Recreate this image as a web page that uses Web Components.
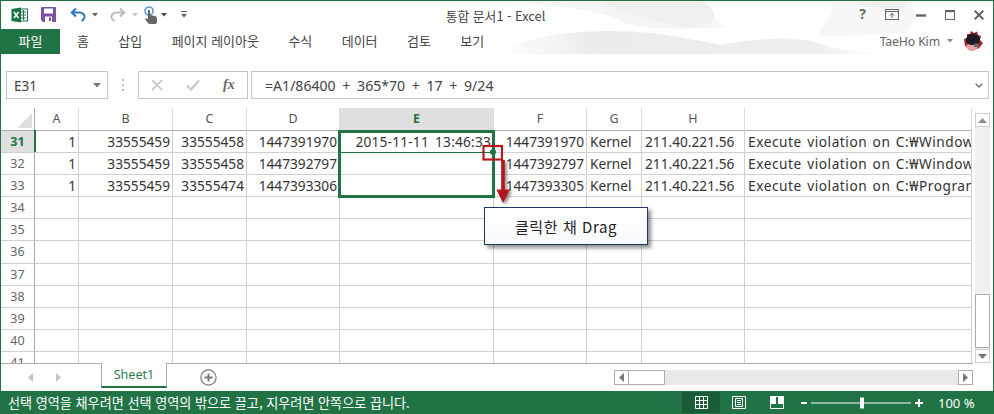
<!DOCTYPE html>
<html lang="ko">
<head>
<meta charset="utf-8">
<title>통합 문서1 - Excel</title>
<style>
  html, body { margin: 0; padding: 0; background: #fff; }
  body { font-family: "Noto Sans", "Noto Sans CJK KR", sans-serif; }
</style>
</head>
<body>
<excel-window>
  <excel-titlebar>통합 문서1 - Excel</excel-titlebar>
  <excel-tabs user="TaeHo Kim"></excel-tabs>
  <excel-formula cell="E31">=A1/86400 + 365*70 + 17 + 9/24</excel-formula>
  <div class="sheet-area" style="display:flex;height:255px;margin-top:9px">
    <excel-grid></excel-grid>
    <excel-vscroll></excel-vscroll>
  </div>
  <excel-sheetbar>Sheet1</excel-sheetbar>
  <excel-status zoom="100 %">선택 영역을 채우려면 선택 영역의 밖으로 끌고, 지우려면 안쪽으로 끕니다.</excel-status>
  <excel-callout slot="over">클릭한 채 Drag</excel-callout>
</excel-window>

<script>
const FONT = `"Noto Sans", "Noto Sans CJK KR", sans-serif`;
const KR = `"Noto Sans CJK KR", "Noto Sans", sans-serif`;

const COLS = [
  { name: "A", w: 44 }, { name: "B", w: 94 }, { name: "C", w: 74 }, { name: "D", w: 93 },
  { name: "E", w: 154, cls: "date" }, { name: "F", w: 93 }, { name: "G", w: 55, cls: "l" }, { name: "H", w: 103, cls: "l" }, { name: "", w: 227, cls: "l msg" }
];

const ROWS = {
  31: ["1", "33555459", "33555458", "1447391970", "2015-11-11 13:46:33", "1447391970", "Kernel", "211.40.221.56", "Execute violation on C:₩Window"],
  32: ["1", "33555459", "33555458", "1447392797", "", "1447392797", "Kernel", "211.40.221.56", "Execute violation on C:₩Window"],
  33: ["1", "33555459", "33555474", "1447393306", "", "1447393305", "Kernel", "211.40.221.56", "Execute violation on C:₩Program"]
};

// 창 전체 틀
class ExcelWindow extends HTMLElement {
  constructor() {
    super();
    this.attachShadow({ mode: "open" });
    this.shadowRoot.innerHTML = `
      <style>
        :host { display: block; position: relative; width: 994px; height: 414px; box-sizing: border-box;
                border: 1px solid #217346; border-bottom: 0; background: #fff; overflow: hidden; }
        .art { position: absolute; left: 0; top: 0; width: 992px; height: 54px; }
        .content { position: relative; display: flex; flex-direction: column; height: 100%; }
      </style>
      <svg class="art" viewBox="0 0 992 54">
        <defs>
          <linearGradient id="fade" x1="0" x2="1" y1="0" y2="0">
            <stop offset="0" stop-color="#eeeeee" stop-opacity="0"/>
            <stop offset=".25" stop-color="#ececec"/>
            <stop offset=".8" stop-color="#eeeeee"/>
            <stop offset="1" stop-color="#f3f3f3" stop-opacity="0"/>
          </linearGradient>
        </defs>
        <path d="M490 53 C530 36 560 30 610 30 C650 30 680 36 720 44 C760 36 800 34 830 46 C850 50 870 52 895 53Z" fill="url(#fade)"/>
        <path d="M520 0 C560 6 600 10 620 20 C640 30 690 28 725 26 C705 16 712 6 690 0Z" fill="#f5f5f5"/>
        <path d="M600 0 C610 8 640 16 672 24 C690 28 706 26 712 18 C716 10 708 4 700 0Z" fill="#f0f0f0"/>
        <path d="M830 0 C838 10 815 30 818 35 C830 36 870 34 905 32 C915 20 915 8 910 0Z" fill="#f7f7f7"/>
        <path d="M855 0 C855 4 870 8 905 8 C905 4 905 2 904 0Z" fill="#f0f0f0"/>
      </svg>
      <div class="content"><slot></slot></div>
      <slot name="over"></slot>
    `;
  }
}

// 제목 표시줄
class ExcelTitlebar extends HTMLElement {
  constructor() {
    super();
    this.attachShadow({ mode: "open" });
    this.shadowRoot.innerHTML = `
      <style>
        :host { display: grid; grid-template-columns: 1fr auto 1fr; height: 28px; align-items: center;
                font: 12.8px ${KR}; color: #444; }
        .qat { display: flex; align-items: center; padding-left: 10px; margin-top: -1px; }
        .title { padding-right: 3px; margin-top: 0; }
        .ctl { display: flex; align-items: center; justify-content: flex-end; margin-top: -1px; }
        .help { font: bold 14px ${FONT}; color: #6a6a6a; margin-right: 19px; margin-top: -2px; }
        svg { display: block; flex: none; }
      </style>
      <div class="qat">
        <svg width="17" height="16" viewBox="0 0 17 16">
          <rect x="8" y="2" width="8.5" height="12" fill="#fff" stroke="#1e7145"/>
          <path d="M10 5h5M10 8h5M10 11h5M12.5 3v10" stroke="#1e7145" fill="none"/>
          <path d="M0.5 2 L10 0.5 V15.5 L0.5 14Z" fill="#1e7145"/>
          <path d="M3 5 L7.5 11 M7.5 5 L3 11" stroke="#fff" stroke-width="1.5"/>
        </svg>
        <svg style="margin-left:13px" width="15" height="15" viewBox="0 0 15 15">
          <path d="M0 1 Q0 0 1 0 H14 Q15 0 15 1 V15 H2 L0 13Z" fill="#7d519f"/>
          <rect x="3" y="1.5" width="9" height="5" fill="#fff"/>
          <rect x="4" y="9.5" width="7" height="5.5" fill="#fff"/>
          <rect x="8" y="10.5" width="2" height="3.5" fill="#7d519f"/>
        </svg>
        <svg style="margin-left:14px" width="16" height="15" viewBox="0 0 16 15">
          <path d="M6 1.5 L1.8 5.5 L6 9.5" fill="none" stroke="#2f75b5" stroke-width="2"/>
          <path d="M2 5.5 H9 C13 5.5 15 8 14.5 10.5 C14 12.5 13 13.5 11.5 14" fill="none" stroke="#2f75b5" stroke-width="2"/>
        </svg>
        <svg style="margin-left:6px" width="6" height="4" viewBox="0 0 6 4"><path d="M0 0H6L3 3.5Z" fill="#666"/></svg>
        <svg style="margin-left:12px" width="16" height="15" viewBox="0 0 16 15">
          <path d="M10 1.5 L14.2 5.5 L10 9.5" fill="none" stroke="#bcbcbc" stroke-width="2"/>
          <path d="M14 5.5 H7 C3 5.5 1 8 1.5 10.5 C2 12.5 3 13.5 4.5 14" fill="none" stroke="#bcbcbc" stroke-width="2"/>
        </svg>
        <svg style="margin-left:6px" width="6" height="4" viewBox="0 0 6 4"><path d="M0 0H6L3 3.5Z" fill="#c4c4c4"/></svg>
        <svg style="margin-left:5px" width="16" height="18" viewBox="0 0 16 18">
          <circle cx="6" cy="5" r="4" fill="none" stroke="#5b9bd5" stroke-width="1.6"/>
          <path d="M5 4.5 Q6 3 7 4.5 V9 L12 10 Q14 10.5 14 12.5 V16 Q14 18 12 18 H7 Q5.5 18 4.5 16.5 L2 13 Q2.5 11.5 5 13Z" fill="#666"/>
        </svg>
        <svg style="margin-left:2px" width="6" height="4" viewBox="0 0 6 4"><path d="M0 0H6L3 3.5Z" fill="#444"/></svg>
        <svg style="margin-left:14px" width="6" height="7" viewBox="0 0 6 7"><path d="M0 0H6V1H0ZM0 3H6L3 6.5Z" fill="#666"/></svg>
      </div>
      <div class="title"><slot></slot></div>
      <div class="ctl">
        <span class="help">?</span>
        <svg style="margin-right:17px" width="14" height="11" viewBox="0 0 14 11">
          <rect x=".5" y=".5" width="13" height="10" fill="none" stroke="#666"/>
          <path d="M0 2.5H14M7 9V4.5M4.8 6.5L7 4.2L9.2 6.5" fill="none" stroke="#666"/>
        </svg>
        <svg style="margin-right:19px;margin-top:2px" width="10" height="3" viewBox="0 0 10 3"><rect width="10" height="2.4" y=".3" fill="#666"/></svg>
        <svg style="margin-right:19px" width="10" height="10" viewBox="0 0 10 10"><rect x=".5" y=".5" width="9" height="9" fill="none" stroke="#666"/><rect width="10" height="2.2" fill="#666"/></svg>
        <svg style="margin-right:9px" width="10" height="10" viewBox="0 0 10 10"><path d="M.7 .7L9.3 9.3M9.3 .7L.7 9.3" stroke="#666" stroke-width="2"/></svg>
      </div>
    `;
  }
}

// 리본 탭 줄
class ExcelTabs extends HTMLElement {
  constructor() {
    super();
    this.attachShadow({ mode: "open" });
    const tabs = ["홈", "삽입", "페이지 레이아웃", "수식", "데이터", "검토", "보기"];
    this.shadowRoot.innerHTML = `
      <style>
        :host { display: flex; height: 25px; align-items: center; font: 13px ${KR}; color: #444; }
        .file { width: 59px; height: 25px; line-height: 24px; text-align: center; background: #217346; color: #fff; }
        .tab { padding: 0 14.7px; white-space: nowrap; margin-top: -3px; }
        .tab:first-of-type { margin-left: 2.3px; }
        .list { display: flex; }
        .user { margin-left: auto; display: flex; align-items: center; font: 12.3px ${FONT}; letter-spacing: -.15px; color: #666; padding-right: 10px; margin-top: -1px; }
        .user svg { display: block; }
      </style>
      <div class="file">파일</div>
      <div class="list">${tabs.map(t => `<div class="tab">${t}</div>`).join("")}</div>
      <div class="user">
        <span>${this.getAttribute("user")}</span>
        <svg style="margin:0 10px 0 7px" width="6" height="4" viewBox="0 0 6 4"><path d="M0 0H6L3 3.5Z" fill="#8a8a8a"/></svg>
        <svg width="20" height="22" viewBox="0 0 20 22">
          <path d="M2 16 L1 9 L4 8 L4 4 L7 4 L8 1 L11 3 L14 1.5 L15 5 L18 6 L17 10 L20 13 L17 17 L15 19 H6Z" fill="#a8242a"/>
          <ellipse cx="10" cy="10" rx="7" ry="6.5" fill="#1d1b22"/>
          <path d="M3 16 Q4 13 8 15 L12 15 L15 18 Q13 21 9 21 Q4 21 3 16Z" fill="#e9a1a8"/>
          <rect x="11" y="13.5" width="4.5" height="3.5" fill="#5a6a80"/>
        </svg>
      </div>
    `;
  }
}

// 이름 상자 + 수식 입력줄
class ExcelFormula extends HTMLElement {
  constructor() {
    super();
    this.attachShadow({ mode: "open" });
    this.shadowRoot.innerHTML = `
      <style>
        :host { display: flex; height: 28px; margin-top: 17px; padding-left: 5px; padding-right: 4px;
                font: 13.6px ${FONT}; color: #444; }
        .box { box-sizing: border-box; height: 28px; border: 1px solid #c6c6c6; background: #fff; display: flex; align-items: center; }
        .name { width: 102px; padding: 0 6px 0 7px; justify-content: space-between; }
        .dots { width: 30px; display: flex; justify-content: center; align-items: center; }
        .fn { width: 110px; padding-left: 12px; box-sizing: border-box; }
        .fx { font: italic bold 14px "Liberation Serif", serif; color: #666; margin-left: 23px; }
        .input { flex: 1; margin-left: 3px; padding: 0 5px 0 13px; justify-content: space-between; font-size: 14.1px; word-spacing: 3px; }
        svg { display: block; flex: none; }
      </style>
      <div class="box name"><span>${this.getAttribute("cell")}</span>
        <svg width="8" height="5" viewBox="0 0 8 5"><path d="M0 0H8L4 4.5Z" fill="#777"/></svg></div>
      <div class="dots"><svg width="3" height="12" viewBox="0 0 3 12"><path d="M0 0h2v2H0zM0 5h2v2H0zM0 10h2v2H0z" fill="#bdbdbd"/></svg></div>
      <div class="box fn">
        <svg width="12" height="12" viewBox="0 0 12 12"><path d="M1 1L11 11M11 1L1 11" stroke="#c8c8c8" stroke-width="1.8"/></svg>
        <svg style="margin-left:23px" width="14" height="12" viewBox="0 0 14 12"><path d="M1 6.5L5 10.5L13 1.5" fill="none" stroke="#c8c8c8" stroke-width="2.2"/></svg>
        <span class="fx">fx</span>
      </div>
      <div class="box input"><span><slot></slot></span>
        <svg width="8" height="5" viewBox="0 0 8 5"><path d="M.7 .7L4 4L7.3 .7" fill="none" stroke="#777" stroke-width="1.5"/></svg></div>
    `;
  }
}

// 셀 격자
class ExcelGrid extends HTMLElement {
  constructor() {
    super();
    this.attachShadow({ mode: "open" });
    let head = `<div class="corner"><svg width="16" height="16" viewBox="0 0 16 16"><path d="M15 0V15H0Z" fill="#dfdfdf"/></svg></div>`;
    COLS.forEach(c => {
      head += `<div class="ch ${c.name === "E" ? "on" : ""}">${c.name}</div>`;
    });
    let body = "";
    for (let r = 31; r <= 41; r++) {
      body += `<div class="rh ${r === 31 ? "on" : ""}">${r}</div>`;
      COLS.forEach((c, i) => {
        const v = ROWS[r] ? ROWS[r][i] : "";
        body += `<div class="c ${c.cls || ""}">${v}</div>`;
      });
    }
    this.shadowRoot.innerHTML = `
      <style>
        :host { display: block; position: relative; width: 971px; height: 255px; overflow: hidden;
                font: 13.7px ${FONT}; color: #333; }
        .g { display: grid; grid-template-columns: 34px ${COLS.map(c => c.w + "px").join(" ")};
             grid-template-rows: 23px; grid-auto-rows: 22.1px; }
        .g > div { box-sizing: border-box; border-right: 1px solid #d0d0d0; border-bottom: 1px solid #d0d0d0; }
        .corner { border-bottom-color: #ababab !important; border-right-color: #ababab !important; position: relative; }
        .corner svg { position: absolute; right: 1px; bottom: 1px; }
        .ch { text-align: center; font-size: 12.5px; line-height: 21px; color: #555;
              border-bottom-color: #ababab !important; border-right-color: #dcdcdc !important; }
        .ch:last-of-type { border-right: 0 !important; }
        .rh { text-align: center; font-size: 12.5px; line-height: 22px; color: #666; border-right-color: #ababab !important; }
        .on { background: #dfdfdf; color: #217346 !important; font-weight: 700; }
        .c { padding: 0 2px; line-height: 21px; text-align: right; white-space: nowrap; overflow: hidden; }
        .c.l { text-align: left; padding-left: 3px; }
        .c.date { word-spacing: 2.4px; letter-spacing: .2px; }
        .c.msg { letter-spacing: .55px; word-spacing: 1.2px; padding-right: 0; }
        .sel { position: absolute; left: 337px; top: 22px; width: 157px; height: 68px; box-sizing: border-box;
               border: 3px solid #217346; }
        .sel i { position: absolute; left: 0; right: 0; top: 19px; height: 1px; background: #217346; }
        .tick { position: absolute; left: 33px; top: 22px; width: 2px; height: 22px; background: #217346; }
        .handle { position: absolute; left: 489px; top: 41px; width: 6px; height: 6px; border-radius: 50%; background: #217346; }
      </style>
      <div class="g">${head}${body}</div>
      <div class="tick"></div>
      <div class="sel"><i></i></div>
      <div class="handle"></div>
    `;
  }
}

// 세로 스크롤
class ExcelVscroll extends HTMLElement {
  constructor() {
    super();
    this.attachShadow({ mode: "open" });
    this.shadowRoot.innerHTML = `
      <style>
        :host { display: flex; flex-direction: column; width: 15px; margin: 5px 0 0 3px; height: 250px; background: #f0f0f0; }
        .btn { box-sizing: border-box; height: 14px; background: #fff; border: 1px solid #d0d0d0;
               display: flex; align-items: center; justify-content: center; }
        .thumb { box-sizing: border-box; height: 54px; margin-top: auto; background: #fff; border: 1px solid #ababab; margin-bottom: 1px; }
        svg { display: block; }
      </style>
      <div class="btn"><svg width="9" height="5" viewBox="0 0 9 5"><path d="M0 5L4.5 0L9 5Z" fill="#8c8c8c"/></svg></div>
      <div class="thumb"></div>
      <div class="btn"><svg width="9" height="5" viewBox="0 0 9 5"><path d="M0 0L4.5 5L9 0Z" fill="#777"/></svg></div>
    `;
  }
}

// 시트 탭 + 가로 스크롤
class ExcelSheetbar extends HTMLElement {
  constructor() {
    super();
    this.attachShadow({ mode: "open" });
    this.shadowRoot.innerHTML = `
      <style>
        :host { display: flex; height: 28px; font: 12.6px ${FONT}; color: #2f7d55; }
        .line { border-top: 1px solid #ababab; height: 27px; }
        .nav { width: 100px; display: flex; align-items: center; box-sizing: border-box; padding-left: 27px; gap: 23px; }
        .tab { box-sizing: border-box; width: 66px; height: 25px; background: #fff; text-align: center; line-height: 23px;
               border-left: 1px solid #ababab; border-right: 1px solid #ababab; border-bottom: 2px solid #217346; }
        .rest { width: 806px; display: flex; align-items: center; box-sizing: border-box; }
        .add { margin-left: 33px; }
        .h { margin-left: 397px; width: 359px; height: 15px; display: flex; background: #e9e9e9; }
        .b { box-sizing: border-box; width: 15px; height: 15px; background: #fff; border: 1px solid #ababab;
             display: flex; align-items: center; justify-content: center; }
        .t { box-sizing: border-box; width: 36px; height: 15px; background: #fff; border: 1px solid #ababab; border-left: 0; }
        svg { display: block; flex: none; }
      </style>
      <div class="line nav">
        <svg width="5" height="9" viewBox="0 0 5 9"><path d="M5 0L0 4.5L5 9Z" fill="#c4c4c4"/></svg>
        <svg width="5" height="9" viewBox="0 0 5 9"><path d="M0 0L5 4.5L0 9Z" fill="#c4c4c4"/></svg>
      </div>
      <div class="tab"><slot></slot></div>
      <div class="line rest">
        <svg class="add" width="17" height="17" viewBox="0 0 17 17">
          <circle cx="8.5" cy="8.5" r="7.6" fill="#fff" stroke="#777" stroke-width="1.2"/>
          <path d="M4.5 8.5H12.5M8.5 4.5V12.5" stroke="#777" stroke-width="1.8"/>
        </svg>
        <div class="h">
          <div class="b"><svg width="5" height="9" viewBox="0 0 5 9"><path d="M5 0L0 4.5L5 9Z" fill="#777"/></svg></div>
          <div class="t"></div>
          <div class="b" style="margin-left:auto"><svg width="5" height="9" viewBox="0 0 5 9"><path d="M0 0L5 4.5L0 9Z" fill="#777"/></svg></div>
        </div>
      </div>
    `;
  }
}

// 상태 표시줄
class ExcelStatus extends HTMLElement {
  constructor() {
    super();
    this.attachShadow({ mode: "open" });
    this.shadowRoot.innerHTML = `
      <style>
        :host { display: flex; align-items: center; height: 23px; margin: 0 -1px; padding-top: 0; background: #217346;
                color: #fff; font: 13.1px ${KR}; margin-top: auto; }
        .msg { padding-left: 8px; white-space: nowrap; margin-top: -1px; }
        .views { margin-left: auto; display: flex; align-items: center; }
        .v { width: 38px; height: 21px; display: flex; align-items: center; justify-content: center; }
        .v.on { background: #1a5c38; }
        .zoom { display: flex; align-items: center; margin-left: 5px; margin-right: 20px; }
        .pct { font: 13px ${FONT}; margin-left: 12px; width: 36px; white-space: nowrap; }
        svg { display: block; flex: none; }
      </style>
      <div class="msg"><slot></slot></div>
      <div class="views">
        <div class="v on"><svg width="13" height="13" viewBox="0 0 13 13"><path d="M.5 .5H12.5V12.5H.5ZM4.5 .5V12.5M8.5 .5V12.5M.5 4.5H12.5M.5 8.5H12.5" fill="none" stroke="#fff"/></svg></div>
        <div class="v"><svg width="14" height="13" viewBox="0 0 14 13"><path d="M.5 .5H13.5V12.5H.5ZM3.5 2.5H10.5V10.5H3.5ZM5 4.5H9M5 6.5H9M5 8.5H9" fill="none" stroke="#fff"/></svg></div>
        <div class="v"><svg width="14" height="13" viewBox="0 0 14 13"><path d="M.5 .5H13.5V12.5H.5Z" fill="none" stroke="#fff"/><path d="M1 0H6V8H1ZM8 0H13V8H8Z" fill="#fff"/></svg></div>
      </div>
      <div class="zoom">
        <svg width="125" height="12" viewBox="0 0 125 12">
          <rect x="0" y="5" width="6" height="2" fill="#fff"/>
          <rect x="10" y="5.5" width="100" height="1" fill="#fff"/>
          <rect x="59" y="0.5" width="4" height="11" fill="#fff"/>
          <path d="M114 5h8v2h-8zM117 2h2v8h-2z" fill="#fff"/>
        </svg>
        <span class="pct">${this.getAttribute("zoom")}</span>
      </div>
    `;
  }
}

// 빨간 표시와 말풍선
class ExcelCallout extends HTMLElement {
  constructor() {
    super();
    this.attachShadow({ mode: "open" });
    this.shadowRoot.innerHTML = `
      <style>
        :host { display: block; position: absolute; left: 0; top: 0; width: 0; height: 0; }
        svg { position: absolute; left: 478px; top: 140px; overflow: visible; }
        .box { position: absolute; left: 483px; top: 206px; width: 164px; height: 38px; box-sizing: border-box;
               border: 1px solid #1f3864; background: linear-gradient(#fff, #f6f9fc); color: #222;
               font: 15px ${KR}; letter-spacing: .6px; display: flex; align-items: center; justify-content: center;
               box-shadow: 3px 3px 4px rgba(0,0,0,.45); white-space: nowrap; }
      </style>
      <svg width="36" height="66" viewBox="0 0 36 66">
        <defs><filter id="s" x="-40%" y="-20%" width="200%" height="150%"><feDropShadow dx="2" dy="2" stdDeviation="1.5" flood-color="#000" flood-opacity=".45"/></filter></defs>
        <rect x="4.5" y="5" width="18.5" height="13.5" fill="none" stroke="#b31b20" stroke-width="2.2"/>
        <g filter="url(#s)">
          <rect x="22.2" y="19" width="3.6" height="30" fill="#b0151b"/>
          <path d="M17.5 48.5H31L24 62Z" fill="#b0151b"/>
        </g>
      </svg>
      <div class="box"><slot></slot></div>
    `;
  }
}

customElements.define("excel-window", ExcelWindow);
customElements.define("excel-titlebar", ExcelTitlebar);
customElements.define("excel-tabs", ExcelTabs);
customElements.define("excel-formula", ExcelFormula);
customElements.define("excel-grid", ExcelGrid);
customElements.define("excel-vscroll", ExcelVscroll);
customElements.define("excel-sheetbar", ExcelSheetbar);
customElements.define("excel-status", ExcelStatus);
customElements.define("excel-callout", ExcelCallout);
</script>
</body>
</html>
